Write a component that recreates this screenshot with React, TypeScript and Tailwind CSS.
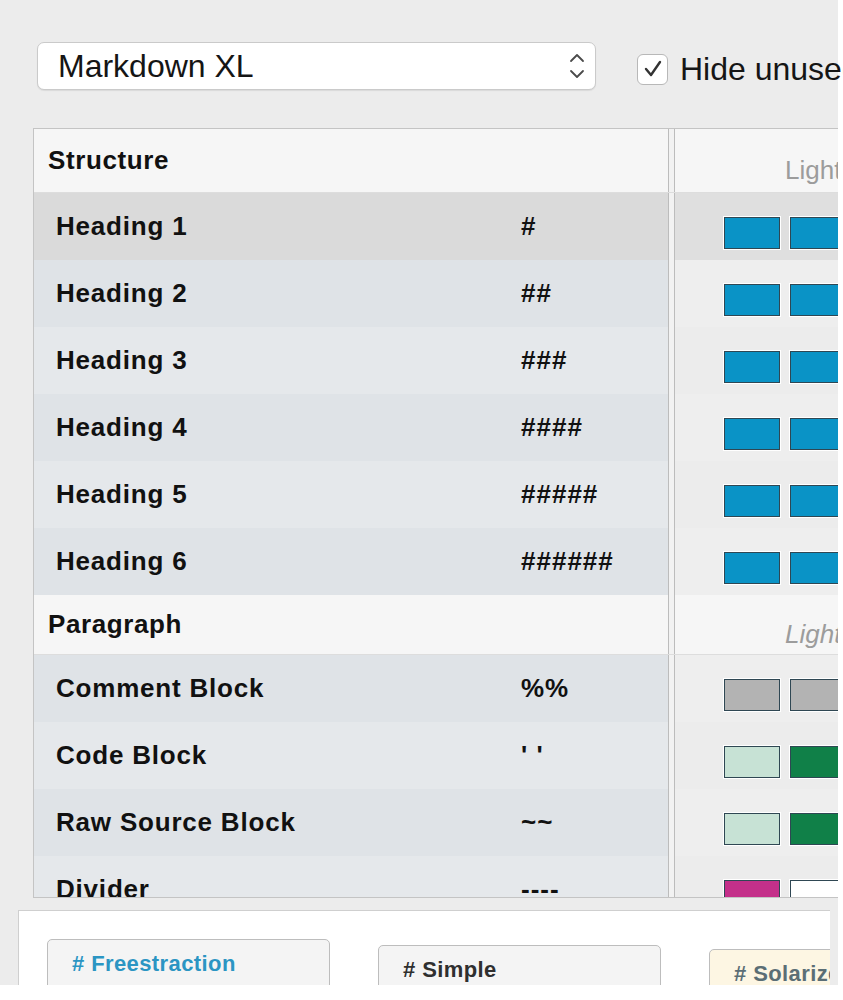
import React from 'react'

type Row = {
  name: string
  sym: string
  colors: [string, string]
  sel?: boolean
}

const structureRows: Row[] = [
  { name: 'Heading 1', sym: '#', colors: ['#0a93c6', '#0a93c6'], sel: true },
  { name: 'Heading 2', sym: '##', colors: ['#0a93c6', '#0a93c6'] },
  { name: 'Heading 3', sym: '###', colors: ['#0a93c6', '#0a93c6'] },
  { name: 'Heading 4', sym: '####', colors: ['#0a93c6', '#0a93c6'] },
  { name: 'Heading 5', sym: '#####', colors: ['#0a93c6', '#0a93c6'] },
  { name: 'Heading 6', sym: '######', colors: ['#0a93c6', '#0a93c6'] },
]

const paragraphRows: Row[] = [
  { name: 'Comment Block', sym: '%%', colors: ['#b3b3b3', '#b3b3b3'] },
  { name: 'Code Block', sym: "' '", colors: ['#c7e2d5', '#108048'] },
  { name: 'Raw Source Block', sym: '~~', colors: ['#c7e2d5', '#108048'] },
  { name: 'Divider', sym: '----', colors: ['#c4308a', '#ffffff'] },
]

const Divider = () => (
  <div className="w-[7px] self-stretch shrink-0 border-x border-[#bcbcbc] bg-[#f2f2f2]" />
)

const Swatch = ({ color }: { color: string }) => (
  <div
    className="w-[56px] h-[32px] shrink-0 border border-[#2f4753] shadow-[0_0_0_1px_#ffffff]"
    style={{ backgroundColor: color }}
  />
)

const Header = ({ title, italic, h }: { title: string; italic?: boolean; h: string }) => (
  <div className={`flex ${h} shrink-0 bg-[#f6f6f6] border-b border-[#dddddd]`}>
    <div className="w-[634px] shrink-0 pl-[14px] flex items-center text-[26px] font-bold tracking-[0.6px] text-[#111]">
      {title}
    </div>
    <Divider />
    <div
      className={`flex-1 pl-[110px] flex items-center pt-[20px] text-[26px] text-[#9c9c9c] whitespace-nowrap ${
        italic ? 'italic' : ''
      }`}
    >
      Light
    </div>
  </div>
)

const TableRow = ({ row, idx }: { row: Row; idx: number }) => {
  const left = row.sel ? 'bg-[#dadada]' : idx % 2 === 0 ? 'bg-[#e5e8eb]' : 'bg-[#dfe3e7]'
  const right = row.sel ? 'bg-[#dfdfdf]' : idx % 2 === 0 ? 'bg-[#ececec]' : 'bg-[#eeeeee]'
  return (
    <div className="flex h-[67px] shrink-0">
      <div className={`flex w-[634px] shrink-0 ${left}`}>
        <div className="w-[475px] shrink-0 pl-[22px] flex items-center text-[26px] font-bold tracking-[0.8px] text-[#111]">
          {row.name}
        </div>
        <div className="flex-1 pl-[12px] flex items-center text-[26px] font-bold tracking-[1px] text-[#111]">
          {row.sym}
        </div>
      </div>
      <Divider />
      <div className={`flex-1 flex items-center gap-[10px] pl-[49px] pt-[12px] ${right}`}>
        <Swatch color={row.colors[0]} />
        <Swatch color={row.colors[1]} />
      </div>
    </div>
  )
}

const Card = ({ label, bg, fg, offset }: { label: string; bg: string; fg: string; offset: string }) => (
  <div className={`w-[283px] h-[70px] shrink-0 rounded-t-[5px] border border-[#bdbdbd] ${bg} ${offset} px-[24px] pt-[7px]`}>
    <span className={`text-[22px] font-bold tracking-[0.4px] whitespace-nowrap ${fg}`}>{label}</span>
  </div>
)

export default function App() {
  return (
    <div className="w-[843px] h-[1000px] overflow-hidden bg-white flex font-['Liberation_Sans',Arial,sans-serif]">
      <div className="w-[838px] h-full bg-[#ececec] flex flex-col shrink-0">
        {/* toolbar */}
        <div className="flex items-center pt-[42px] pl-[37px] h-[90px] shrink-0">
          <div className="w-[559px] h-[48px] shrink-0 bg-white rounded-[7px] border border-[#cacaca] shadow-[0_1px_1px_rgba(0,0,0,0.08)] flex items-center pl-[20px] pr-[10px]">
            <span className="flex-1 text-[32px] text-[#151515] leading-none">Markdown XL</span>
            <svg width="16" height="30" viewBox="0 0 16 30" fill="none" stroke="#4a4a4a" strokeWidth="1.8" strokeLinecap="round" strokeLinejoin="round">
              <path d="M2 10 L8 4 L14 10" />
              <path d="M2 20 L8 26 L14 20" />
            </svg>
          </div>
          <div className="ml-[41px] mt-[6px] w-[31px] h-[31px] shrink-0 rounded-[6px] border border-[#b8b8b8] bg-white flex items-center justify-center">
            <svg width="22" height="22" viewBox="0 0 22 22" fill="none" stroke="#333" strokeWidth="2.4" strokeLinecap="round" strokeLinejoin="round">
              <path d="M4 11 L9 17 L18 4" />
            </svg>
          </div>
          <span className="ml-[12px] mt-[6px] text-[32px] text-[#151515] whitespace-nowrap leading-none">Hide unused</span>
        </div>

        {/* table */}
        <div className="mt-[38px] ml-[33px] h-[770px] shrink-0 border-y border-l border-[#c4c4c4] overflow-hidden flex flex-col bg-[#ececec]">
          <Header title="Structure" h="h-[64px]" />
          {structureRows.map((r, i) => (
            <TableRow key={r.name} row={r} idx={i} />
          ))}
          <Header title="Paragraph" h="h-[60px]" italic />
          {paragraphRows.map((r, i) => (
            <TableRow key={r.name} row={r} idx={i + 1} />
          ))}
        </div>

        {/* theme previews */}
        <div className="h-[12px] shrink-0" />
        <div className="ml-[18px] w-[812px] h-[75px] shrink-0 bg-white border-l border-t border-[#cfcfcf] overflow-hidden flex items-start pl-[28px] pt-[28px] gap-[48px]">
          <Card label="# Freestraction" bg="bg-[#f4f4f4]" fg="text-[#2b95c3]" offset="mt-0" />
          <Card label="# Simple" bg="bg-[#f4f4f4]" fg="text-[#2f2f2f]" offset="mt-[6px]" />
          <Card label="# Solarized" bg="bg-[#fdf6e3]" fg="text-[#5b6e75]" offset="mt-[10px]" />
        </div>
        <div className="flex-1 bg-white" />
      </div>
    </div>
  )
}
